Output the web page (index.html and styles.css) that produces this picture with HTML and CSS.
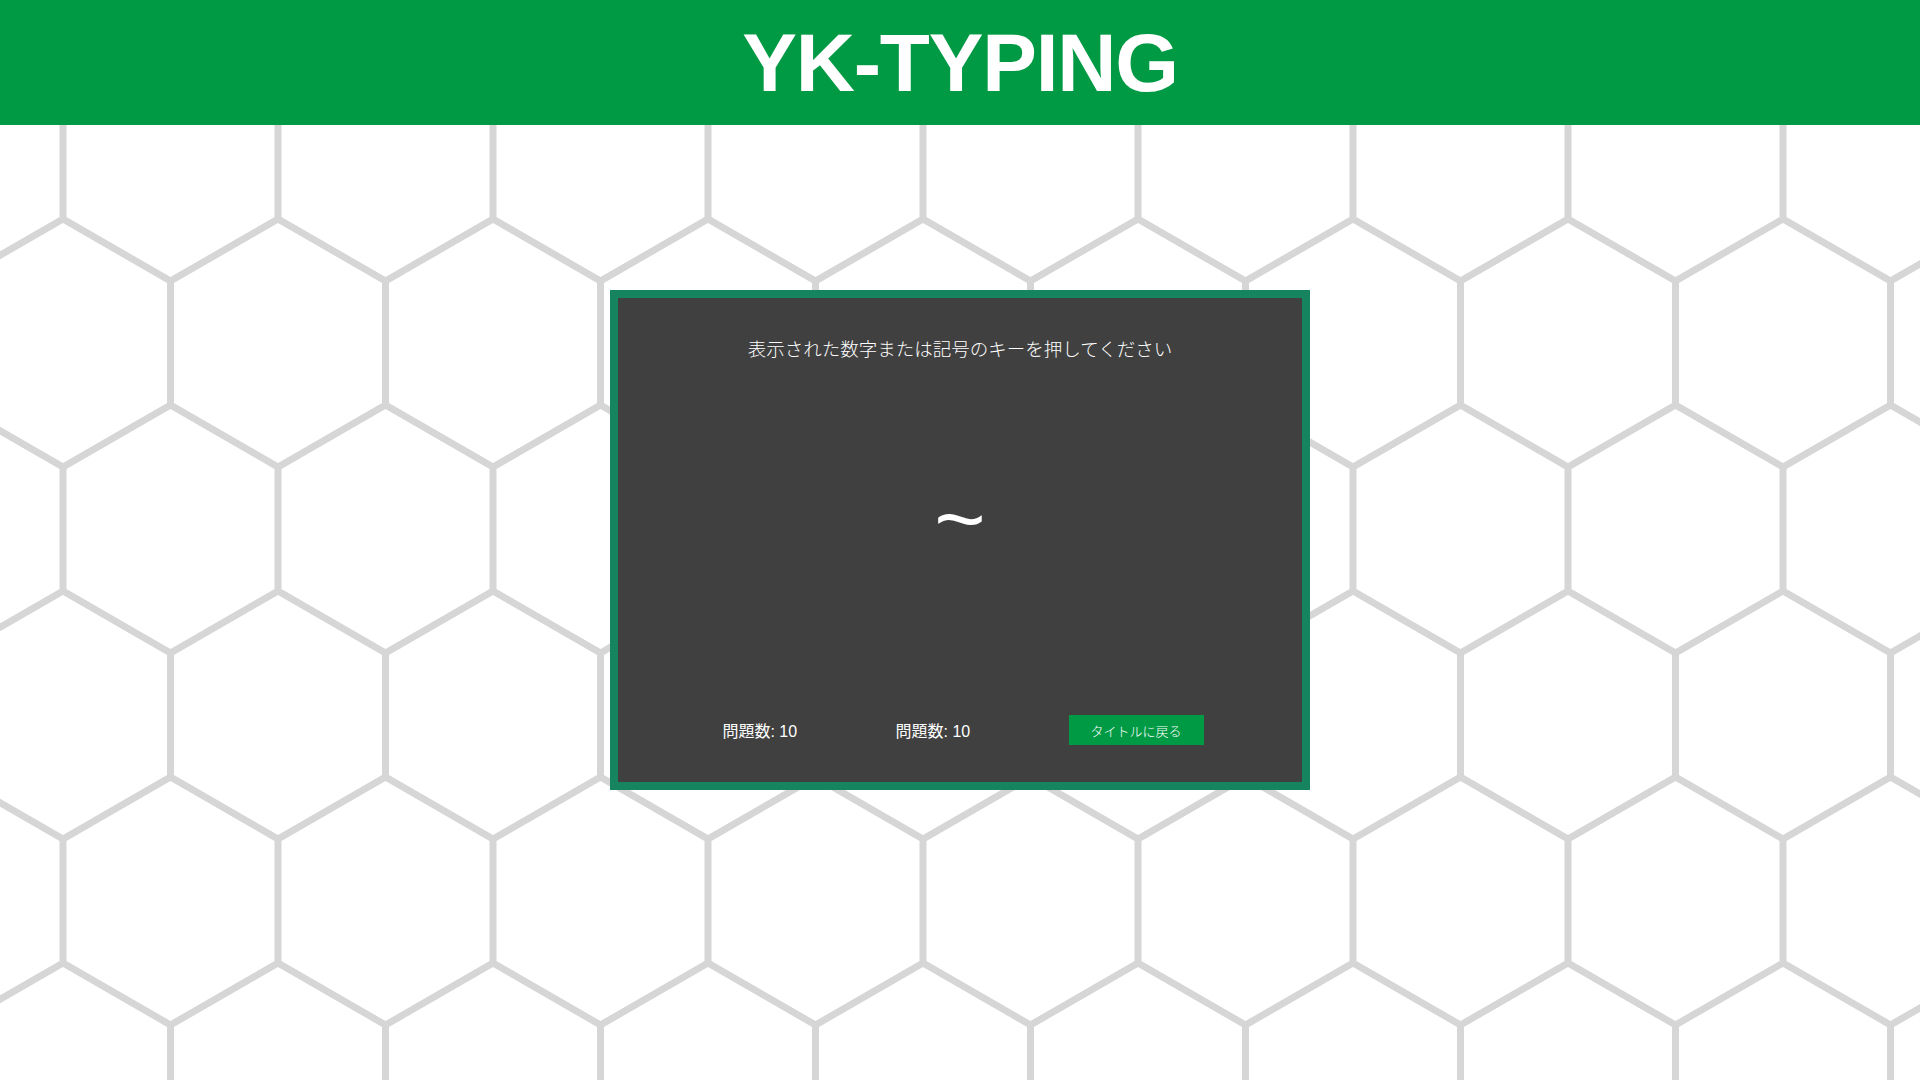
FILE: index.html
```html
<!DOCTYPE html>
<html lang="ja">
<head>
<meta charset="utf-8">
<title>YK-TYPING</title>
<link rel="stylesheet" href="styles.css">
</head>
<body>
<svg class="hex-bg" width="1920" height="1080" aria-hidden="true">
  <defs>
    <pattern id="hex" width="215" height="372" x="63" y="95" patternUnits="userSpaceOnUse">
      <path d="M0,-62 L0,124 M215,-62 L215,124 M0,124 L107.5,186 L215,124 M107.5,186 L107.5,310 M0,372 L107.5,310 L215,372 M0,0 L107.5,-62 L215,0 M0,372 L0,434 M215,372 L215,434" fill="none" stroke="#d6d6d6" stroke-width="7"/>
    </pattern>
  </defs>
  <rect width="100%" height="100%" fill="url(#hex)"/>
</svg>
<header class="site-header">
  <h1 class="site-title">YK-TYPING</h1>
</header>
<main class="stage">
  <section class="panel">
    <p class="prompt">表示された数字または記号のキーを押してください</p>
    <div class="target">~</div>
    <div class="panel-footer">
      <span class="stat">問題数: 10</span>
      <span class="stat">問題数: 10</span>
      <button class="back-btn" type="button">タイトルに戻る</button>
    </div>
  </section>
</main>
</body>
</html>
```

FILE: styles.css
```css
html, body {
  margin: 0;
  padding: 0;
}

body {
  min-height: 100vh;
  background: #ffffff;
  font-family: "Liberation Sans", "Noto Sans CJK JP", sans-serif;
  overflow: hidden;
}

.hex-bg {
  position: fixed;
  left: 0;
  top: 0;
  z-index: -1;
  display: block;
}

.site-header {
  height: 125px;
  background: #009a44;
  display: flex;
  align-items: center;
  justify-content: center;
}

.site-title {
  margin: 0;
  color: #ffffff;
  font-family: "Liberation Sans", Arial, sans-serif;
  font-weight: 700;
  font-size: 82px;
  line-height: 1;
  letter-spacing: -1.2px;
}

.stage {
  display: flex;
  justify-content: center;
  padding-top: 165px;
}

.panel {
  box-sizing: border-box;
  width: 700px;
  height: 500px;
  border: 8px solid #16845e;
  background: #404040;
  display: flex;
  flex-direction: column;
  align-items: center;
  padding: 38px 0 37px;
}

.prompt {
  margin: 0;
  color: #ffffff;
  font-family: "Noto Sans CJK JP", sans-serif;
  font-weight: 300;
  font-size: 18.5px;
  line-height: 24px;
}

.target {
  margin-top: 115px;
  color: #ffffff;
  font-family: "Liberation Sans", Arial, sans-serif;
  font-size: 88px;
  line-height: 88px;
}

.panel-footer {
  box-sizing: border-box;
  margin-top: auto;
  width: 100%;
  height: 30px;
  padding-left: 6px;
  display: flex;
  align-items: center;
  justify-content: space-evenly;
}

.stat {
  margin-top: 4px;
  color: #ffffff;
  font-family: "Liberation Sans", "Noto Sans CJK JP", sans-serif;
  font-size: 16px;
  line-height: 20px;
}

.back-btn {
  width: 135px;
  height: 30px;
  border: none;
  background: #009a44;
  color: #ffffff;
  font-family: "Noto Sans CJK JP", sans-serif;
  font-weight: 300;
  font-size: 13px;
  padding: 0;
  cursor: pointer;
}
```
